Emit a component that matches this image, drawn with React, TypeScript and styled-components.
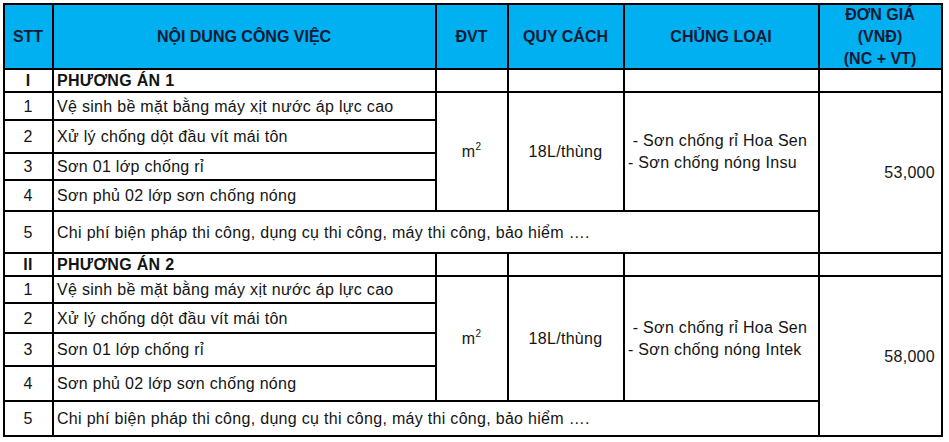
import React from "react";
import styled, { createGlobalStyle, css } from "styled-components";

const GlobalStyle = createGlobalStyle`
  html, body {
    margin: 0;
    padding: 0;
    background: #ffffff;
  }
  body {
    font-family: "Liberation Sans", Arial, "Noto Sans", sans-serif;
    color: #111;
  }
`;

const Page = styled.div`
  padding: 3px 0 0 3px;
  width: 949px;
  height: 442px;
  box-sizing: border-box;
  overflow: hidden;
`;

const Sheet = styled.div`
  display: grid;
  grid-template-columns: 49px 383px 72px 116px 195px 123px;
  grid-template-rows: 65px 23px 28px 33px 27px 31px 42px 23px 27px 30px 33px 35px 35px;
  width: 940px;
  box-sizing: border-box;
  border-left: 2px solid #000;
  border-top: 2px solid #000;
  font-size: 16px;
  line-height: 22px;
`;

type CellProps = {
  $col: number;
  $row: number;
  $colSpan?: number;
  $rowSpan?: number;
  $align?: "left" | "center" | "right";
  $bold?: boolean;
  $head?: boolean;
};

const Cell = styled.div<CellProps>`
  grid-column: ${(p) => p.$col} / span ${(p) => p.$colSpan ?? 1};
  grid-row: ${(p) => p.$row} / span ${(p) => p.$rowSpan ?? 1};
  box-sizing: border-box;
  border-right: 2px solid #000;
  border-bottom: 2px solid #000;
  display: flex;
  flex-direction: column;
  justify-content: center;
  align-items: ${(p) =>
    p.$align === "left" ? "flex-start" : p.$align === "right" ? "flex-end" : "center"};
  text-align: ${(p) => p.$align ?? "center"};
  padding: 1px ${(p) => (p.$align === "right" ? "6px" : "4px")} 0 3px;
  white-space: pre;
  letter-spacing: 0.3px;
  font-weight: ${(p) => (p.$bold ? 700 : 400)};
  color: #141414;
  ${(p) =>
    p.$head &&
    css`
      background: #00b0f0;
      color: #0e1b33;
      font-weight: 700;
      letter-spacing: 0;
      padding-top: 0;
    `}
`;

const Sup = styled.sup`
  font-size: 10px;
  line-height: 0;
  position: relative;
  top: -1px;
`;

const Lines = styled.div`
  display: flex;
  flex-direction: column;
  line-height: 22px;
`;

type Plan = {
  roman: string;
  title: string;
  start: number;
  brand: string;
  price: string;
};

const tasks = [
  "Vệ sinh bề mặt bằng máy xịt nước áp lực cao",
  "Xử lý chống dột đầu vít mái tôn",
  "Sơn 01 lớp chống rỉ",
  "Sơn phủ 02 lớp sơn chống nóng",
];

const extra = "Chi phí biện pháp thi công, dụng cụ thi công, máy thi công, bảo hiểm ….";

const plans: Plan[] = [
  { roman: "I", title: "PHƯƠNG ÁN 1", start: 2, brand: "Insu", price: "53,000" },
  { roman: "II", title: "PHƯƠNG ÁN 2", start: 8, brand: "Intek", price: "58,000" },
];

function PlanBlock({ plan }: { plan: Plan }) {
  const s = plan.start;
  return (
    <>
      <Cell $col={1} $row={s} $bold>
        {plan.roman}
      </Cell>
      <Cell $col={2} $row={s} $align="left" $bold>
        {plan.title}
      </Cell>
      <Cell $col={3} $row={s} />
      <Cell $col={4} $row={s} />
      <Cell $col={5} $row={s} />
      <Cell $col={6} $row={s} />
      {tasks.map((t, i) => (
        <React.Fragment key={t}>
          <Cell $col={1} $row={s + 1 + i}>
            {String(i + 1)}
          </Cell>
          <Cell $col={2} $row={s + 1 + i} $align="left">
            {t}
          </Cell>
        </React.Fragment>
      ))}
      <Cell $col={3} $row={s + 1} $rowSpan={4}>
        <span>
          m<Sup>2</Sup>
        </span>
      </Cell>
      <Cell $col={4} $row={s + 1} $rowSpan={4}>
        18L/thùng
      </Cell>
      <Cell $col={5} $row={s + 1} $rowSpan={4} $align="left">
        <Lines>
          <span>{" - Sơn chống rỉ Hoa Sen"}</span>
          <span>{"- Sơn chống nóng " + plan.brand}</span>
        </Lines>
      </Cell>
      <Cell $col={6} $row={s + 1} $rowSpan={5} $align="right">
        {plan.price}
      </Cell>
      <Cell $col={1} $row={s + 5}>
        5
      </Cell>
      <Cell $col={2} $row={s + 5} $colSpan={4} $align="left">
        {extra}
      </Cell>
    </>
  );
}

export default function App() {
  return (
    <>
      <GlobalStyle />
      <Page>
        <Sheet>
          <Cell $col={1} $row={1} $head>
            STT
          </Cell>
          <Cell $col={2} $row={1} $head>
            NỘI DUNG CÔNG VIỆC
          </Cell>
          <Cell $col={3} $row={1} $head>
            ĐVT
          </Cell>
          <Cell $col={4} $row={1} $head>
            QUY CÁCH
          </Cell>
          <Cell $col={5} $row={1} $head>
            CHỦNG LOẠI
          </Cell>
          <Cell $col={6} $row={1} $head>
            <Lines>
              <span>ĐƠN GIÁ</span>
              <span>(VNĐ)</span>
              <span>(NC + VT)</span>
            </Lines>
          </Cell>
          {plans.map((p) => (
            <PlanBlock key={p.roman} plan={p} />
          ))}
        </Sheet>
      </Page>
    </>
  );
}
